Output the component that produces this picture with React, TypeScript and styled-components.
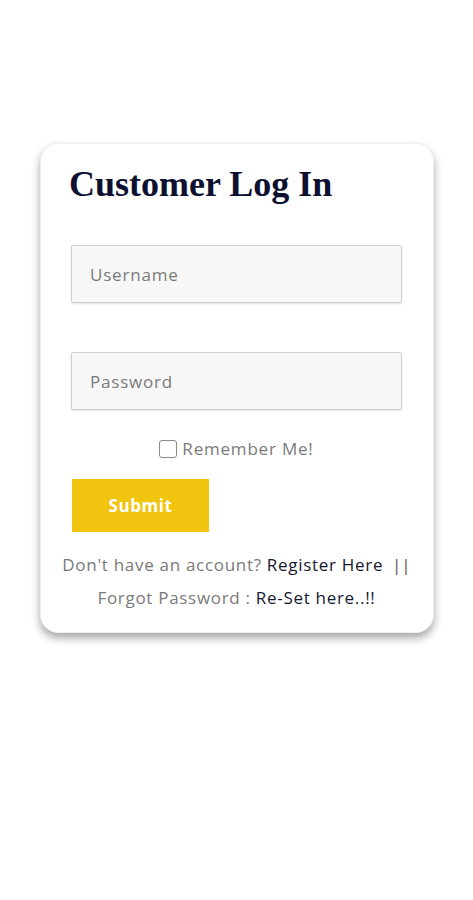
import React from "react";
import styled, { createGlobalStyle } from "styled-components";

const GlobalStyle = createGlobalStyle`
  html, body {
    margin: 0;
    padding: 0;
    background: #ffffff;
    font-family: "Open Sans", "Liberation Sans", sans-serif;
  }
`;

const Page = styled.div`
  width: 473px;
  min-height: 900px;
  padding-top: 143px;
  box-sizing: border-box;
  display: flex;
  justify-content: center;
  align-items: flex-start;
`;

const Card = styled.div`
  width: 394px;
  margin-left: 1px;
  box-sizing: border-box;
  background: #fff;
  border-radius: 18px;
  border: 1px solid #f0efe8;
  box-shadow: 0 5px 8px rgba(0, 0, 0, 0.35);
  padding: 20px 31px 18px 30px;
  display: flex;
  flex-direction: column;
`;

const Title = styled.h1`
  margin: 0 0 0 -2px;
  font-family: "Liberation Serif", "DejaVu Serif", serif;
  font-weight: 700;
  font-size: 36px;
  line-height: 40px;
  color: #0d1030;
`;

const Input = styled.input<{ $top: number }>`
  width: 331px;
  height: 58px;
  box-sizing: border-box;
  margin-top: ${(p) => p.$top}px;
  border: 1px solid #cfcfcf;
  border-radius: 2px;
  background: #f7f7f7;
  box-shadow: 0 1px 2px rgba(0, 0, 0, 0.12);
  padding: 0 18px;
  font-family: "Open Sans", sans-serif;
  font-size: 17px;
  letter-spacing: 0.8px;
  color: #333;
  &::placeholder {
    color: #7a7a7a;
  }
`;

const RememberRow = styled.label`
  margin-top: 27px;
  display: flex;
  justify-content: center;
  align-items: center;
  gap: 5px;
  font-size: 17px;
  letter-spacing: 0.8px;
  color: #7a7a7a;
`;

const Box = styled.input`
  margin: 0;
  width: 18px;
  height: 18px;
  appearance: none;
  border: 1.5px solid #8a8a8a;
  border-radius: 3px;
  background: #fff;
`;

const SubmitButton = styled.button`
  margin-top: 19px;
  margin-left: 1px;
  width: 137px;
  height: 53px;
  border: none;
  background: #f1c40f;
  color: #fff;
  font-family: "Open Sans", sans-serif;
  font-weight: 700;
  font-size: 17px;
  letter-spacing: 0.6px;
  cursor: pointer;
`;

const Links = styled.div`
  margin: 16px -30px 0;
  text-align: center;
  font-size: 17px;
  letter-spacing: 0.7px;
  line-height: 33px;
  color: #7a7a7a;
  white-space: nowrap;
`;

const Link = styled.a`
  color: #16182e;
  text-decoration: none;
`;

const Divider = styled.span`
  letter-spacing: 0;
  color: #555;
`;

export default function App() {
  return (
    <>
      <GlobalStyle />
      <Page>
        <Card>
          <Title>Customer Log In</Title>
          <Input $top={41} type="text" placeholder="Username" />
          <Input $top={49} type="password" placeholder="Password" />
          <RememberRow>
            <Box type="checkbox" />
            Remember Me!
          </RememberRow>
          <SubmitButton>Submit</SubmitButton>
          <Links>
            <div>
              Don't have an account? <Link href="#">Register Here</Link>
              <Divider>&nbsp; ||</Divider>
            </div>
            <div>
              Forgot Password : <Link href="#">Re-Set here..!!</Link>
            </div>
          </Links>
        </Card>
      </Page>
    </>
  );
}
